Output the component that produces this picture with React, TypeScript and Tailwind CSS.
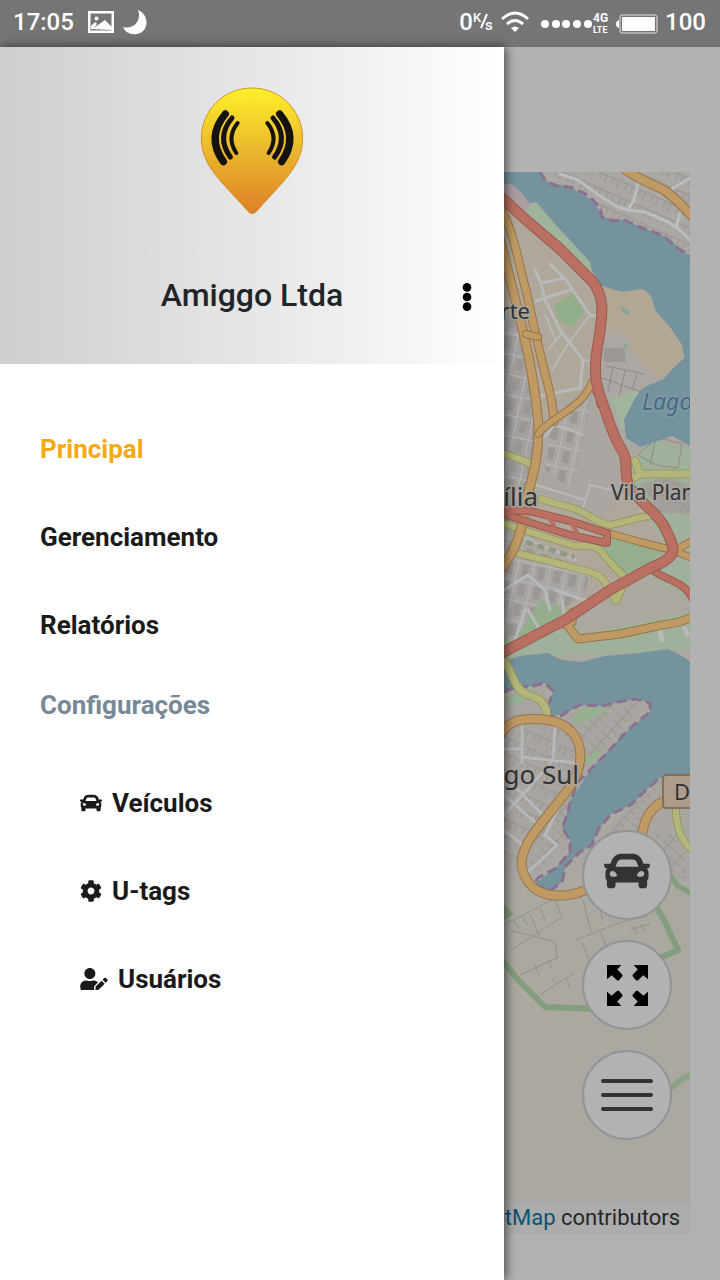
import React from 'react';
import { FaCar, FaCog, FaUserEdit } from 'react-icons/fa';

interface RoadProps {
  d: string;
  width: number;
  color: string;
  casing?: string;
}

const RED = '#b96f61';
const RED_EDGE = '#9b5b50';
const ORANGE = '#c09a64';
const ORANGE_EDGE = '#957549';
const YELLOW = '#b4b679';
const YELLOW_EDGE = '#969864';

const Road: React.FC<RoadProps> = ({ d, width, color, casing }) => (
  <g fill="none" strokeLinecap="round" strokeLinejoin="round">
    {casing && <path d={d} stroke={casing} strokeWidth={width + 2} />}
    <path d={d} stroke={color} strokeWidth={width} />
  </g>
);

const NORTH_SHORE =
  'M540 172 L546 181 L556 186 L570 187 L584 193 L594 201 L600 208 L602 217 L612 221 L624 220 L640 227 L664 236 L676 247 L690 256';
const PENINSULA =
  'M504 692 L517 686 L530 687 L545 683 L553 691 L549 704 L551 716 L558 718 L568 711 L580 705 L602 706 L618 702 L636 699 L650 703 L650 712 L637 722 L625 733 L605 755 L590 770 L578 782 L571 800 L567 815 L562 828 L570 840 L570 852 L556 868 L538 878 L534 884 L550 891';
const EAST_BANK =
  'M550 891 L562 882 L566 866 L580 852 L592 845 L598 830 L610 815 L632 804 L645 791 L660 778 L672 775 L690 775';

const CityMap: React.FC = () => (
  <svg
    className="block w-full flex-1"
    viewBox="30 172 660 1030"
    preserveAspectRatio="xMaxYMin slice"
    role="img"
    aria-label="Mapa"
  >
    <defs>
      <pattern id="blocks" width="14" height="15" patternUnits="userSpaceOnUse" patternTransform="rotate(24)">
        <path d="M0 3h14M4 3v7M10 3v8" stroke="#96938f" strokeWidth="1" fill="none" />
      </pattern>
      <pattern id="lots" width="8" height="17" patternUnits="userSpaceOnUse" patternTransform="rotate(-48)">
        <path d="M0 8h8M3 1v13" stroke="#96938f" strokeWidth="1" fill="none" />
      </pattern>
      <pattern id="grid" width="16" height="20" patternUnits="userSpaceOnUse" patternTransform="rotate(12)">
        <path d="M5 3h7v12h-7z" fill="#9a9794" />
        <path d="M0 0h16M0 0v20" stroke="#b7b7ba" strokeWidth="2" fill="none" />
      </pattern>
    </defs>

    <rect x="30" y="172" width="660" height="1030" fill="#aaa8a0" />

    {/* bairros do norte */}
    <path d="M504 190 L560 235 L600 300 L598 400 L630 470 L690 560 L690 640 L504 665Z" fill="#b0a79b" />
    <path d="M504 310 L520 325 L538 400 L530 530 L504 560Z" fill="#a3a09e" />
    <path d="M504 310 L520 325 L538 400 L530 530 L504 560Z" fill="url(#grid)" />
    <path d="M554 400 L592 392 L610 430 L622 485 L600 525 L537 500 L545 440Z" fill="#aba6a1" />
    <path d="M553 415 L592 398 L582 445 L572 490 L545 470Z" fill="url(#grid)" />
    <path d="M504 565 L520 545 L590 570 L585 595 L525 632 L504 640Z" fill="#a8a4a1" />
    <path d="M504 565 L520 545 L590 570 L585 595 L525 632 L504 640Z" fill="url(#grid)" />

    {/* areas verdes */}
    <path d="M554 305 L572 294 L585 312 L572 327 L558 320Z" fill="#92ad8a" />
    <path d="M624 480 L650 440 L690 448 L690 650 L504 658 L504 640 L560 622 L668 550Z" fill="#9fb19a" />
    <path d="M608 535 L666 550 L628 578 L600 545Z" fill="#95ae8f" />
    <path d="M586 604 L650 576 L674 590 L690 600 L690 612 L580 634 L573 618Z" fill="#aca79f" />
    <path d="M640 484 L668 478 L690 485 L690 515 L660 512Z" fill="#a39f9b" />
    <path d="M640 484 L668 478 L690 485 L690 515 L660 512Z" fill="url(#blocks)" />
    <path d="M638 455 l20 -18 l24 7 l-4 24 l-22 -3z M656 438 l-6 27" fill="none" stroke="#8f8984" />
    <path d="M530 615 L542 600 L560 606 L566 618 L535 635 L515 640Z" fill="#93ad8d" />
    <path d="M610 398 L642 386 L630 418 L622 430Z" fill="#a1b59c" />

    {/* lago */}
    <path
      d="M504 172 L540 172 L546 181 L570 187 L594 201 L602 217 L624 220 L664 236 L690 256 L690 446 L672 436 L655 442 L640 447 L626 438 L624 420 L634 400 L642 388 L664 379 L672 369 L684 358 L682 345 L672 330 L655 310 L651 296 L643 289 L622 292 L600 285 L591 268 L575 248 L552 224 L536 202 L528 204 L516 188 L504 184Z"
      fill="#74939c"
    />
    <path d="M528 208 L536 202 L556 225 L590 262 L594 284 L560 252 L522 214Z" fill="#a0b49c" />
    <path d="M504 185 L512 184 L522 193 L530 204 L522 214 L504 199Z" fill="#ab9da0" />
    <path d="M592 278 L601 286 L622 292 L643 289 L651 296 L655 310 L672 330 L682 345 L684 358 L672 369 L663 379 L640 377 L634 355 L600 330Z" fill="#b2a694" />
    <path d="M604 330 L625 337 L640 362 L660 378 L640 390 L604 400 L598 380Z" fill="#aca7a2" />
    <path d="M604 348 h20 l2 14 h-22z" fill="#9a9794" />
    <path d="M620 306 l8 4 l2 5 l-8 -2z M622 346 l4 -3 l2 6z" fill="#8aa397" />
    <path d="M606 366 l38 8 M602 378 l40 14 M613 368 l-5 23 M625 371 l-6 26 M637 374 l-5 16" stroke="#8d8985" fill="none" />

    <path
      d="M504 662 L520 656 L548 653 L562 660 L582 662 L605 656 L640 653 L668 649 L684 657 L690 662 L690 775 L672 775 L660 778 L645 791 L632 804 L610 815 L598 830 L592 845 L580 852 L566 866 L562 882 L550 891 L534 884 L556 868 L570 852 L570 840 L562 828 L571 800 L590 770 L625 733 L650 712 L650 703 L636 699 L602 706 L580 705 L558 718 L551 716 L549 704 L553 691 L545 683 L530 687 L504 692Z"
      fill="#74939c"
    />

    {/* margem norte */}
    <path d="M540 172 L690 172 L690 256 L664 236 L624 220 L602 217 L594 201 L570 187 L546 181Z" fill="#aba7a2" />
    <path d="M540 172 L690 172 L690 256 L664 236 L624 220 L602 217 L594 201 L570 187 L546 181Z" fill="url(#blocks)" />
    <Road d="M560 174 L578 180 L600 196 L616 206 L628 210 L645 212 L668 222 L680 230 L690 240" width={3} color="#bdbdbf" />
    <Road d="M638 184 L634 200 L628 210 M680 214 L676 228 M670 190 L690 178" width={3} color="#bdbdbf" />
    <Road d="M626 170 C640 180 652 184 664 190 C676 198 684 208 694 218" width={8} color={ORANGE} casing={ORANGE_EDGE} />

    {/* Lago Sul */}
    <path d="M504 700 L518 688 L545 684 L549 704 L552 716 L602 706 L636 699 L648 706 L605 753 L578 780 L562 828 L569 845 L536 880 L504 880Z" fill="#a9a5a1" />
    <path d="M555 722 L580 706 L645 703 L605 753 L586 766 L584 745Z" fill="url(#lots)" />
    <path d="M504 735 L530 720 L570 728 L577 760 L565 790 L535 830 L525 855 L504 870Z" fill="url(#blocks)" />
    <path d="M575 790 L562 828 L569 845 L536 876 L528 860 L540 830Z" fill="url(#lots)" />
    <path d="M572 716 L585 707 L612 709 L590 720 L574 725Z M584 757 L607 747 L598 758 L586 766Z M506 697 L528 690 L525 703 L506 706Z" fill="#98af92" />
    <path d="M600 835 L632 806 L662 780 L690 776 L690 880 L655 890 L598 880 L580 870 L582 852Z" fill="#a9a5a1" />
    <path d="M602 838 L632 808 L660 782 L660 810 L640 830 L595 860 L585 856Z M655 835 L680 830 L688 880 L665 875Z" fill="url(#lots)" />
    <path d="M522 724 v40 M504 749 l18 0 M521 757 l55 6 M555 725 l-2 35 l-26 30 l-24 26 M504 795 l36 32 M512 784 l30 30 M504 830 l20 16 M565 795 l-20 40 l12 10 l-34 32" stroke="#b7b7b9" strokeWidth="3" fill="none" />

    {/* loteamentos ao sul */}
    <path d="M504 925 l50 -26 l8 18 l-52 34 M510 930 l45 12 l2 16 l-35 16 M530 914 l10 24 M514 920 l6 10 M522 916 l6 10 M540 908 l5 12 M520 975 l38 -18 M535 965 l4 10 M548 960 l4 8 M540 995 l34 -22 M556 984 l-4 -6 M566 978 l4 10 M583 900 l8 32 M576 940 l45 -18 l26 -6 M582 942 l8 20 M600 932 l6 14 M630 930 l20 -6 M634 926 l3 8 M641 924 l3 8 M598 890 l4 30" stroke="#93918b" fill="none" />
    <g opacity="0.85">
      <Road d="M502 960 L518 980 L545 1007 L600 1009" width={6} color="#7e9c79" />
      <Road d="M655 905 L664 920 L678 950 L660 958" width={6} color="#7e9c79" />
      <Road d="M672 1087 L680 1080 L692 1074" width={6} color="#87a282" />
      <Road d="M668 872 L678 886 L692 894" width={5} color="#7e9c79" />
      <path d="M504 904 L514 914 L504 920Z" fill="#7e9c79" />
    </g>

    {/* limites municipais */}
    <g fill="none" stroke="#8a7190" strokeWidth="3" strokeDasharray="10 5">
      <path d={NORTH_SHORE} />
      <path d={PENINSULA} />
      <path d={EAST_BANK} />
    </g>

    {/* vias locais */}
    <Road d="M535 270 L541 283 L545 300 M550 264 L566 280 L590 315 L597 316 M541 283 L565 278 M536 301 L570 290 M545 300 L560 330 L583 360 L580 388 L540 396" width={3} color="#b8b9ba" />
    <Road d="M590 315 L568 344 L552 370 M545 315 L556 340 M548 350 L563 332 M583 360 L594 361 M537 445 L555 425 L583 435 M536 485 L585 500 L590 485 L612 490 M540 495 L584 510 M585 500 L582 515" width={2} color="#b8b9ba" />
    <Road d="M504 590 L528 575 L545 590 L550 610 M528 610 L540 630 M525 610 L514 643 M555 590 L590 602 M562 600 L564 615" width={3} color="#b8b9ba" />
    <Road d="M525 538 L575 560" width={3} color="#b6b6b6" />
    <path d="M526 542 l48 15" stroke="#8b9989" strokeWidth="5" strokeDasharray="7 5" />
    <path d="M660 628 l2 14 M684 626 l4 10" stroke="#b8b8b8" strokeWidth="5" />

    {/* vias secundarias */}
    <Road d="M502 453 Q520 458 535 466" width={6} color={YELLOW} casing={YELLOW_EDGE} />
    <Road d="M541 499 L575 509 C590 514 600 525 610 525 C624 523 636 517 650 516" width={6} color={YELLOW} casing={YELLOW_EDGE} />
    <Road d="M635 461 L640 474 L692 474 M640 474 L630 480" width={7} color={YELLOW} casing={YELLOW_EDGE} />
    <Road d="M502 523 L530 532 L575 546 Q592 544 600 550 Q612 566 628 580" width={6} color={YELLOW} casing={YELLOW_EDGE} />
    <Road d="M520 554 L545 560 L590 572 Q604 576 608 588 L616 601 L622 588" width={6} color={YELLOW} casing={YELLOW_EDGE} />
    <Road d="M504 660 C512 672 514 688 526 694 C540 698 547 704 547 716" width={7} color={YELLOW} casing={YELLOW_EDGE} />
    <Road d="M676 808 C676 830 682 842 692 850" width={6} color={YELLOW} casing={YELLOW_EDGE} />

    {/* vias principais */}
    <Road d="M502 212 C514 232 518 262 526 290 C534 328 540 355 548 385 Q553 405 554 422" width={7} color={ORANGE} casing={ORANGE_EDGE} />
    <Road d="M500 240 C508 270 512 288 518 310 C526 342 533 374 537 410 C542 450 532 480 526 500 C522 534 516 548 502 568" width={8} color={ORANGE} casing={ORANGE_EDGE} />
    <Road d="M538 434 C550 418 572 412 584 396 Q590 388 592 382 M592 386 Q600 394 600 404 M526 334 L538 337" width={6} color={ORANGE} casing={ORANGE_EDGE} />
    <Road d="M608 533 L640 542 L672 550 L692 558 M672 552 L692 541" width={6} color={ORANGE} casing={ORANGE_EDGE} />
    <Road d="M563 624 L572 622 L573 612 M567 625 L578 639 L620 634 L662 625 Q680 623 692 617" width={7} color={ORANGE} casing={ORANGE_EDGE} />
    <Road d="M500 736 C508 720 520 719 535 719 C562 719 577 731 580 750 C583 776 566 792 552 810 C534 832 519 850 522 868 C527 890 545 898 568 895 Q588 892 604 880" width={8} color={ORANGE} casing={ORANGE_EDGE} />
    <Road d="M642 840 C642 820 652 804 668 800" width={8} color={ORANGE} casing={ORANGE_EDGE} />

    <Road d="M500 510 L530 511 L570 521 L607 533 L607 543 L570 535 L525 521 L500 513" width={6} color={RED} casing={RED_EDGE} />
    <Road d="M548 517 L554 525 M570 522 L577 532" width={4} color={RED} />
    <Road d="M650 568 C662 580 684 580 692 598" width={6} color={RED} casing={RED_EDGE} />
    <Road
      d="M500 196 L525 219 L560 249 L592 281 C606 298 602 316 599 338 C594 364 594 378 600 396 C608 416 612 436 622 450 C630 462 622 474 630 488 C640 502 656 512 664 526 C676 550 680 556 650 568 L610 590 L565 620 L500 654"
      width={9}
      color={RED}
      casing={RED_EDGE}
    />

    {/* placa da rodovia */}
    <rect x="663" y="775" width="46" height="33" rx="3" fill="#ac9c8b" stroke="#86705d" strokeWidth="2" />

    <g className="font-['Noto_Sans',sans-serif]" fill="#333333" stroke="#aaa6a0" strokeWidth="3" paintOrder="stroke">
      <text x="530" y="319" fontSize="22" textAnchor="end">Asa Norte</text>
      <text x="538" y="506" fontSize="26" textAnchor="end">Brasília</text>
      <text x="611" y="500" fontSize="21">Vila Planalto</text>
      <text x="579" y="784" fontSize="26" textAnchor="end">Lago Sul</text>
      <text x="674" y="800" fontSize="22" stroke="none">DF</text>
      <text x="642" y="410" fontSize="23" fontStyle="italic" fill="#4b6885" stroke="#809ba4">Lago Paranoá</text>
    </g>
  </svg>
);

const Logo: React.FC = () => (
  <svg className="h-32 w-[104px]" viewBox="58 38 312 384" role="img" aria-label="Amiggo">
    <defs>
      <linearGradient id="pin" x1="0" y1="0" x2="0" y2="1">
        <stop offset="0" stopColor="#fff02a" />
        <stop offset="0.45" stopColor="#ebbd2c" />
        <stop offset="1" stopColor="#df7f27" />
      </linearGradient>
    </defs>
    <path
      d="M214 41 C129 41 62 108 62 192 C62 245 87 282 122 323 C152 358 178 382 202 411 Q214 424 228 411 C251 383 279 356 308 322 C342 282 366 245 366 192 C366 108 299 41 214 41Z"
      fill="url(#pin)"
      stroke="#cf9430"
      strokeWidth="3"
    />
    <g fill="none" stroke="#15130f" strokeLinecap="round">
      <path d="M134 119 Q76 188 128 262" strokeWidth="22" />
      <path d="M154 131 Q106 188 149 248" strokeWidth="15" />
      <path d="M171 146 Q136 190 167 236" strokeWidth="12" />
      <path d="M297 119 Q355 188 303 262" strokeWidth="22" />
      <path d="M277 131 Q325 188 282 248" strokeWidth="15" />
      <path d="M260 146 Q295 190 264 236" strokeWidth="12" />
    </g>
  </svg>
);

const StatusBar: React.FC = () => (
  <header className="flex h-[47px] shrink-0 items-center justify-between bg-[#757575] pr-[14px] pl-[13px] pb-1 text-2xl font-medium text-white">
    <div className="flex items-center">
      <span>17:05</span>
      <svg className="ml-[14px] h-[22px] w-[26px]" viewBox="0 0 26 22" aria-hidden="true">
        <path fillRule="evenodd" fill="#fff" d="M0 0h26v22H0zM2.500 2.500v17h21v-17z" />
        <circle cx="8.500" cy="7.500" r="2" fill="#fff" />
        <path d="M3 18v-3l4-4 2 2-3 4 11-8 7 7v3z" fill="#fff" />
      </svg>
      <svg className="ml-2 h-[26px] w-[25px]" viewBox="0 0 25 26" aria-hidden="true">
        <path d="M16 1c12 5 11 22-1 24C8 26 3 23 1 18c11 3 19-7 15-17z" fill="#fff" />
      </svg>
    </div>
    <div className="flex items-center">
      <span>0</span>
      <svg className="h-6 w-5" viewBox="0 0 20 24" fill="#fff" aria-label="K/s">
        <text x="0" y="12" fontSize="13">K</text>
        <path d="M8 18L14 4" stroke="#fff" strokeWidth="2" />
        <text x="12" y="20" fontSize="15">s</text>
      </svg>
      <svg className="ml-2 h-[22px] w-7" viewBox="0 0 28 22" fill="none" stroke="#fff" strokeWidth="3" aria-hidden="true">
        <path d="M1 8Q14-4 27 8M6 13q8-7 16 0" />
        <path d="M10 17q4-3 8 0l-4 4z" fill="#fff" stroke="none" />
      </svg>
      <svg className="mt-1 ml-3 h-2 w-[52px]" viewBox="0 0 52 8" fill="#fff" aria-hidden="true">
        <circle cx="4" cy="4" r="4" />
        <circle cx="15" cy="4" r="4" />
        <circle cx="25" cy="4" r="4" />
        <circle cx="36" cy="4" r="4" />
        <circle cx="47" cy="4" r="4" />
      </svg>
      <span className="mt-1 flex flex-col font-bold">
        <span className="text-[12px] leading-[14px]">4G</span>
        <span className="text-[9px] leading-[11px]">LTE</span>
      </span>
      <svg className="mt-1 ml-2 h-5 w-[42px]" viewBox="0 0 42 20" aria-hidden="true">
        <path d="M3 6v8q-3-1-3-4t3-4z" fill="#fff" />
        <rect x="4" y="1" width="37" height="18" rx="2" fill="none" stroke="#e6e6e6" />
        <rect x="6" y="3" width="33" height="14" fill="#fff" />
      </svg>
      <span className="ml-[7px]">100</span>
    </div>
  </header>
);

const roundButton =
  'flex size-[90px] items-center justify-center rounded-full border-2 border-[#949494] bg-[#b2b2b2]';

const MapControls: React.FC = () => (
  <div className="absolute right-[18px] bottom-[94px] flex flex-col gap-5">
    <button type="button" aria-label="Veículos" className={roundButton}>
      <FaCar className="mb-2 size-[46px] text-[#333333]" />
    </button>
    <button type="button" aria-label="Tela cheia" className={roundButton}>
      <svg className="size-[41px]" viewBox="0 0 40 40" fill="#000" aria-hidden="true">
        <path id="corner" d="M0 0H14L10 4.500L15 9.500V11L11.500 15H10L4.500 10L0 14Z" />
        <use href="#corner" transform="matrix(-1 0 0 1 40 0)" />
        <use href="#corner" transform="matrix(1 0 0 -1 0 40)" />
        <use href="#corner" transform="matrix(-1 0 0 -1 40 40)" />
      </svg>
    </button>
    <button type="button" aria-label="Menu" className={roundButton}>
      <span className="flex flex-col gap-[10px]">
        <span className="h-1 w-[52px] rounded-full bg-[#333333]" />
        <span className="h-1 w-[52px] rounded-full bg-[#333333]" />
        <span className="h-1 w-[52px] rounded-full bg-[#333333]" />
      </span>
    </button>
  </div>
);

const mainLinks = [
  { label: 'Principal', active: true },
  { label: 'Gerenciamento', active: false },
  { label: 'Relatórios', active: false },
];

const settingsLinks = [
  { label: 'Veículos', icon: <FaCar className="size-[22px]" /> },
  { label: 'U-tags', icon: <FaCog className="size-[22px]" /> },
  { label: 'Usuários', icon: <FaUserEdit className="h-[22px] w-7" /> },
];

const Drawer: React.FC = () => (
  <aside className="absolute inset-y-0 left-0 w-[70%] bg-white shadow-[2px_0_10px_rgba(0,0,0,0.6)]">
    <div className="bg-linear-to-r from-[#cecece] to-white px-8 pt-10 pb-[45px]">
      <div className="flex justify-center">
        <Logo />
      </div>
      <div className="mt-14 grid grid-cols-[1fr_auto_1fr] items-center">
        <h1 className="col-start-2 text-[32px] leading-12 font-medium text-[#212529]">Amiggo Ltda</h1>
        <button type="button" aria-label="Opções" className="mt-1 justify-self-end">
          <svg className="block h-7 w-[10px]" viewBox="0 0 10 28" fill="#000" aria-hidden="true">
            <circle cx="5" cy="4.400" r="4.300" />
            <circle cx="5" cy="14" r="4.300" />
            <circle cx="5" cy="23.600" r="4.300" />
          </svg>
        </button>
      </div>
    </div>
    <nav className="px-10 pt-[41px] text-[26px] font-bold text-[#1a1a1a]">
      {mainLinks.map(({ label, active }) => (
        <a key={label} href="#" className={`flex h-22 items-center ${active ? 'text-[#f4a915]' : ''}`}>
          {label}
        </a>
      ))}
      <h2 className="flex h-18 items-center text-[#778899]">Configurações</h2>
      <div className="pt-[18px] pl-10">
        {settingsLinks.map(({ label, icon }) => (
          <a key={label} href="#" className="flex h-22 items-center gap-[10px]">
            {icon}
            {label}
          </a>
        ))}
      </div>
    </nav>
  </aside>
);

const App: React.FC = () => {
  return (
    <div className="flex min-h-screen flex-col bg-[#b2b2b2] font-[Roboto,sans-serif]">
      <StatusBar />
      <div className="relative flex flex-1 flex-col">
        <main className="flex flex-1 flex-col px-[30px] pt-[125px] pb-[46px]">
          <div className="relative flex flex-1 flex-col overflow-hidden">
            <CityMap />
            <p className="bg-[#acacac] pr-[10px] text-right text-[22px] leading-8 whitespace-nowrap text-[#262626]">
              © <a href="#" className="text-[#0b5171]">OpenStreetMap</a> contributors
            </p>
            <MapControls />
          </div>
        </main>
        <Drawer />
      </div>
    </div>
  );
};

export default App;
